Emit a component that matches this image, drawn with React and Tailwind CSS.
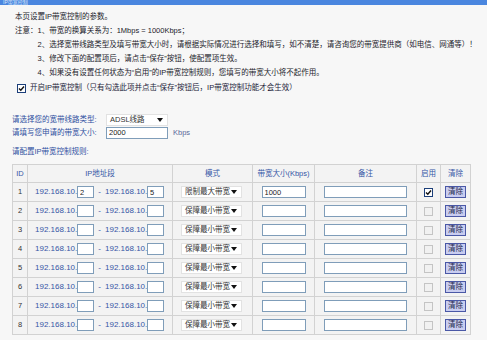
import React from 'react'

const rows = [
  { id: 1, from: '2', to: '5', mode: '限制最大带宽', bw: '1000', on: true },
  ...[2, 3, 4, 5, 6, 7, 8].map((id) => ({ id, from: '', to: '', mode: '保障最小带宽', bw: '', on: false })),
]

const notes = [
  '1、带宽的换算关系为：1Mbps = 1000Kbps；',
  '2、选择宽带线路类型及填写带宽大小时，请根据实际情况进行选择和填写，如不清楚，请咨询您的带宽提供商（如电信、网通等）！',
  '3、修改下面的配置项后，请点击“保存”按钮，使配置项生效。',
  '4、如果没有设置任何状态为“启用”的IP带宽控制规则，您填写的带宽大小将不起作用。',
]

function Box({ checked }) {
  // old XP-style checkbox, the unchecked ones look disabled
  if (checked) {
    return (
      <span className="inline-flex w-[9px] h-[9px] items-center justify-center border border-[#1c3f7a] bg-white">
        <svg width="7" height="7" viewBox="0 0 7 7">
          <path d="M1 3.5 L2.8 5.3 L6 1.5" stroke="#111" strokeWidth="1.4" fill="none" />
        </svg>
      </span>
    )
  }
  return <span className="inline-block w-[9px] h-[9px] border border-[#c4c4c4] bg-[#f1f1f1]" />
}

function Field({ w, value }) {
  return (
    <input
      readOnly
      value={value}
      className={`${w} h-[12px] shrink-0 border border-[#7f9db9] bg-white px-[2px] text-[7.5px] leading-[10px] text-[#222] outline-none`}
    />
  )
}

function Pick({ w, label }) {
  return (
    <div className={`${w} h-[12px] flex items-center justify-between bg-white border border-[#e2e2e2] pl-[3px] pr-[4px] text-[#333]`}>
      <span>{label}</span>
      <svg width="6" height="4" viewBox="0 0 6 4">
        <path d="M0 0 H6 L3 4 Z" fill="#111" />
      </svg>
    </div>
  )
}

const th = 'border border-[#d2d2d2] font-normal text-[#3556a6] p-0'
const td = 'border border-[#d2d2d2] p-0'

export default function App() {
  return (
    <div className="w-[487px] h-[340px] overflow-hidden bg-[#f7f7f7] font-['Liberation_Sans','Noto_Sans_CJK_SC',sans-serif] text-[7.5px]">
      <div className="h-[5px] overflow-hidden bg-[#4a86df]">
        <div className="pl-[3px] text-[5px] leading-[5px] text-[#dfe9fb]">IP带宽控制</div>
      </div>

      <div className="pt-[5px] pl-[15px] leading-[14px] text-[#1c1c2c]">
        <div>本页设置IP带宽控制的参数。</div>
        <div className="flex">
          <span className="whitespace-nowrap">注意：</span>
          <div className="whitespace-nowrap">
            {notes.map((n) => (
              <div key={n}>{n}</div>
            ))}
          </div>
        </div>
      </div>

      <div className="mt-[1px] h-[14px] flex items-center gap-[4px] pl-[17px] text-[#1c1c3a]">
        <Box checked />
        <span>开启IP带宽控制（只有勾选此项并点击“保存”按钮后，IP带宽控制功能才会生效）</span>
      </div>

      <div className="mt-[18px] pl-[12px] text-[#2f4f9f]">
        <div className="h-[13px] flex items-center">
          <span className="w-[94px]">请选择您的宽带线路类型:</span>
          <Pick w="w-[62px]" label="ADSL线路" />
        </div>
        <div className="h-[13px] flex items-center">
          <span className="w-[94px]">请填写您申请的带宽大小:</span>
          <Field w="w-[62px]" value="2000" />
          <span className="ml-[5px] text-[#5a6a9a]">Kbps</span>
        </div>
        <div className="mt-[6px] leading-[14px]">请配置IP带宽控制规则:</div>
      </div>

      <table className="mt-[5px] ml-[12px] w-[458px] table-fixed border-collapse bg-[#f3f3f3] text-center">
        <colgroup>
          <col className="w-[15px]" />
          <col className="w-[145px]" />
          <col className="w-[80px]" />
          <col className="w-[62px]" />
          <col className="w-[102px]" />
          <col className="w-[24px]" />
          <col className="w-[30px]" />
        </colgroup>
        <thead>
          <tr className="h-[18px]">
            <th className={th}>ID</th>
            <th className={th}>IP地址段</th>
            <th className={th}>模式</th>
            <th className={th}>带宽大小(Kbps)</th>
            <th className={th}>备注</th>
            <th className={th}>启用</th>
            <th className={th}>清除</th>
          </tr>
        </thead>
        <tbody>
          {rows.map((r) => (
            <tr key={r.id} className="h-[19px]">
              <td className={`${td} text-[#333]`}>{r.id}</td>
              <td className={td}>
                <div className="flex items-center pl-[7px] text-[8px] text-[#3556a6]">
                  <span className="w-[42px] shrink-0 text-left">192.168.10.</span>
                  <Field w="w-[17px]" value={r.from} />
                  <span className="w-[11px] shrink-0 text-center">-</span>
                  <span className="w-[42px] shrink-0 text-left">192.168.10.</span>
                  <Field w="w-[17px]" value={r.to} />
                </div>
              </td>
              <td className={td}>
                <div className="flex justify-center pr-[2px]">
                  <Pick w="w-[61px]" label={r.mode} />
                </div>
              </td>
              <td className={td}>
                <div className="flex justify-center">
                  <Field w="w-[44px]" value={r.bw} />
                </div>
              </td>
              <td className={td}>
                <div className="flex justify-center">
                  <Field w="w-[83px]" value="" />
                </div>
              </td>
              <td className={td}>
                <div className="flex justify-center">
                  <Box checked={r.on} />
                </div>
              </td>
              <td className={td}>
                <div className="flex justify-center">
                  <button className="h-[12px] w-[21px] border border-[#4a58a6] bg-[#c9cdf0] text-[7.5px] leading-[10px] text-[#1a1f4a]">
                    清除
                  </button>
                </div>
              </td>
            </tr>
          ))}
        </tbody>
      </table>
    </div>
  )
}
